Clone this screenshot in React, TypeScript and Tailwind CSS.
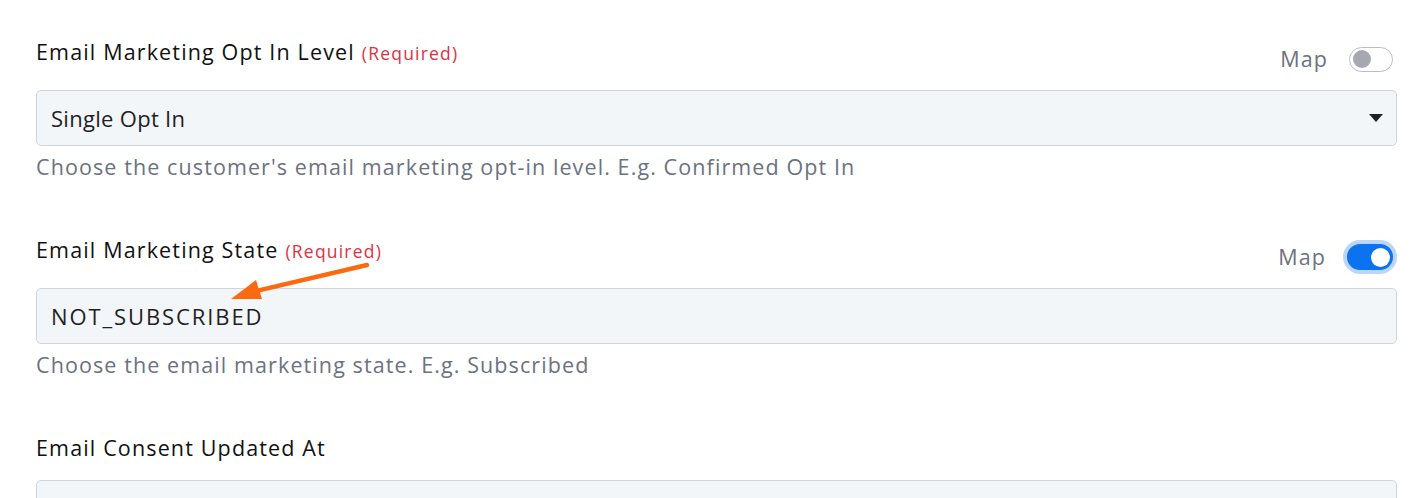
import { ReactNode } from "react";

const FONT = "font-['Open_Sans','Noto_Sans',sans-serif]";

function Toggle({ on }: { on: boolean }) {
  if (on) {
    return (
      <span className="flex h-[26px] w-[46px] items-center justify-end rounded-full bg-[#0b72f0] pr-[3px] ring-4 ring-[#bcd6fb]">
        <span className="h-[19px] w-[19px] rounded-full bg-white" />
      </span>
    );
  }
  return (
    <span className="flex h-[25px] w-[44px] items-center rounded-full border border-[#b9bec6] bg-white pl-[3px]">
      <span className="h-[18px] w-[18px] rounded-full bg-[#a4a9b1]" />
    </span>
  );
}

function Field({
  label,
  required,
  map,
  help,
  children,
}: {
  label: string;
  required?: boolean;
  map?: "on" | "off";
  help?: string;
  children?: ReactNode;
}) {
  return (
    <section>
      <div className="flex items-start justify-between">
        <div className="text-[21.5px] leading-[28px] tracking-[1.15px] text-[#111]">
          {label}
          {required && (
            <span className="ml-[7px] text-[17.5px] tracking-[1.2px] text-[#e0303f]">(Required)</span>
          )}
        </div>
        {map && (
          <div className="mt-[8px] mr-[4px] flex items-center gap-[21px]">
            <span className="text-[21.5px] leading-[26px] tracking-[1.1px] text-[#6b7280]">Map</span>
            <Toggle on={map === "on"} />
          </div>
        )}
      </div>
      <div className="mt-[18px] flex h-[56px] items-center justify-between rounded-[5px] border border-[#cfd4db] bg-[#f3f6f9] pl-[14px] pr-[13px] text-[22px] tracking-[0.3px] text-[#1f2125]">
        {children}
      </div>
      {help && (
        <p className="mt-[6px] text-[21.5px] leading-[30px] tracking-[1.1px] text-[#6b7280]">{help}</p>
      )}
    </section>
  );
}

export default function App() {
  return (
    <div className={`relative h-[498px] overflow-hidden bg-white pl-[36px] pr-[19px] pt-[38px] ${FONT}`}>
      <div className="flex flex-col gap-[54px]">
        <Field
          label="Email Marketing Opt In Level"
          required
          map="off"
          help="Choose the customer's email marketing opt-in level. E.g. Confirmed Opt In"
        >
          <span>Single Opt In</span>
          <svg width="14" height="8" viewBox="0 0 14 8">
            <path d="M0 0h14L7 8z" fill="#1f2125" />
          </svg>
        </Field>
        <Field
          label="Email Marketing State"
          required
          map="on"
          help="Choose the email marketing state. E.g. Subscribed"
        >
          <span className="tracking-[1.9px]">NOT_SUBSCRIBED</span>
        </Field>
        <Field label="Email Consent Updated At" />
      </div>

      {/* annotation arrow */}
      <svg className="pointer-events-none absolute left-0 top-0" width="1416" height="498">
        <line x1="367" y1="265" x2="252" y2="292" stroke="#fb6a12" strokeWidth="4.5" strokeLinecap="round" />
        <path d="M231 299 L256 280 L262 299 Z" fill="#fb6a12" />
      </svg>
    </div>
  );
}
